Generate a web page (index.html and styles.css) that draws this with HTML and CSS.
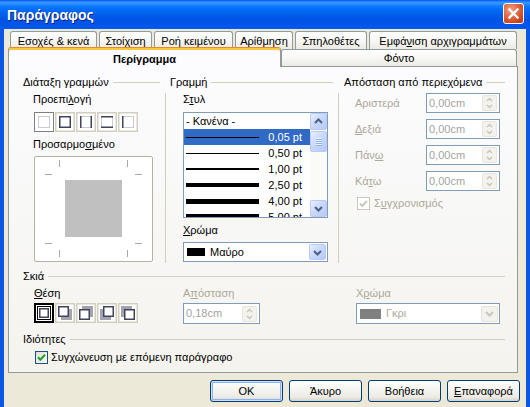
FILE: index.html
```html
<!DOCTYPE html>
<html lang="el">
<head>
<meta charset="utf-8">
<title>Παράγραφος</title>
<link rel="stylesheet" href="styles.css">
</head>
<body>
<div class="window">
  <div class="titlebar">
    <span class="title">Παράγραφος</span>
    <span class="close"><svg width="19" height="19" viewBox="0 0 19 19"><path d="M5.5 5.5 L13.5 13.5 M13.5 5.5 L5.5 13.5" stroke="#fff" stroke-width="2.4" stroke-linecap="square"/></svg></span>
  </div>
  <div class="client">
    <div class="tabs">
      <div class="tabrow row1">
        <div class="tab t1">Εσοχές &amp; κενά</div>
        <div class="tab t2">Στοίχιση</div>
        <div class="tab t3">Ροή κειμένου</div>
        <div class="tab t4">Αρίθμηση</div>
        <div class="tab t5">Σπηλοθέτες</div>
        <div class="tab t6">Εμφά<u>ν</u>ιση αρχιγραμμάτων</div>
      </div>
      <div class="tabrow row2">
        <div class="tab active t7">Περίγραμμα</div>
        <div class="tab t8">Φόντο</div>
      </div>
    </div>

    <div class="panel">
      <div class="top">
        <div class="col c1">
          <div class="gh"><span>Διάταξη γραμμών</span><i></i></div>
          <div class="cb">
            <div class="lbl">Προεπι<u>λ</u>ογή</div>
            <div class="iconset">
              <svg width="20" height="20" viewBox="0 0 20 20"><rect x="0.5" y="0.5" width="19" height="19" fill="#fff" stroke="#000" stroke-dasharray="1 1"/><rect x="4.5" y="4.5" width="11" height="11" fill="none" stroke="#CACAD6"/></svg>
              <svg width="20" height="20" viewBox="0 0 20 20"><rect x="0.75" y="0.75" width="18.5" height="18.5" fill="#fff" stroke="#D3CFBF" stroke-width="1.5"/><rect x="4.75" y="4.75" width="10.5" height="10.5" fill="none" stroke="#40445C" stroke-width="1.5"/></svg>
              <svg width="20" height="20" viewBox="0 0 20 20"><rect x="0.75" y="0.75" width="18.5" height="18.5" fill="#fff" stroke="#D3CFBF" stroke-width="1.5"/><rect x="4.5" y="4.5" width="11" height="11" fill="none" stroke="#CACAD6"/><path d="M4.75 4 V16 M15.25 4 V16" stroke="#40445C" stroke-width="1.5"/></svg>
              <svg width="20" height="20" viewBox="0 0 20 20"><rect x="0.75" y="0.75" width="18.5" height="18.5" fill="#fff" stroke="#D3CFBF" stroke-width="1.5"/><rect x="4.5" y="4.5" width="11" height="11" fill="none" stroke="#CACAD6"/><path d="M4 4.75 H16 M4 15.25 H16" stroke="#40445C" stroke-width="1.5"/></svg>
              <svg width="20" height="20" viewBox="0 0 20 20"><rect x="0.75" y="0.75" width="18.5" height="18.5" fill="#fff" stroke="#D3CFBF" stroke-width="1.5"/><rect x="4.5" y="4.5" width="11" height="11" fill="none" stroke="#CACAD6"/><path d="M4.75 4 V16" stroke="#40445C" stroke-width="1.5"/></svg>
            </div>
            <div class="lbl gap">Προσαρμο<u>σ</u>μένο</div>
            <div class="preview">
              <svg width="117" height="104" viewBox="0 0 117 104">
                <rect x="30" y="23" width="57" height="57" fill="#C0C0C0"/>
                <path d="M24.5 3 V10 M92.5 3 V10 M24.5 93 V100 M92.5 93 V100 M10 17.5 H17 M100 17.5 H107 M10 86.5 H17 M100 86.5 H107" stroke="#A8A8A8" stroke-width="1"/>
              </svg>
            </div>
          </div>
        </div>

        <div class="col c2">
          <div class="gh"><span>Γραμμή</span><i></i></div>
          <div class="cb">
            <div class="lbl">Σ<u>τ</u>υλ</div>
            <div class="listbox">
              <div class="items">
                <div class="item">- Κανένα -</div>
                <div class="item sel"><span class="ln w1"></span><span class="v">0,05 pt</span></div>
                <div class="item"><span class="ln w1"></span><span class="v">0,50 pt</span></div>
                <div class="item"><span class="ln w2"></span><span class="v">1,00 pt</span></div>
                <div class="item"><span class="ln w4"></span><span class="v">2,50 pt</span></div>
                <div class="item"><span class="ln w5"></span><span class="v">4,00 pt</span></div>
                <div class="item"><span class="ln w6"></span><span class="v">5,00 pt</span></div>
              </div>
              <div class="scroll">
                <div class="sbtn"><svg width="15" height="15" viewBox="0 0 15 15"><path d="M4 9 L7.5 5.5 L11 9" fill="none" stroke="#4D6185" stroke-width="2"/></svg></div>
                <div class="thumb"><svg width="15" height="19" viewBox="0 0 15 19"><path d="M4.5 6.5 H10.5 M4.5 8.5 H10.5 M4.5 10.5 H10.5 M4.5 12.5 H10.5" stroke="#EEF4FE" stroke-width="1"/><path d="M5 7.5 H11 M5 9.5 H11 M5 11.5 H11 M5 13.5 H11" stroke="#8CB0F8" stroke-width="1"/></svg></div>
                <div class="track"></div>
                <div class="sbtn"><svg width="15" height="15" viewBox="0 0 15 15"><path d="M4 6 L7.5 9.5 L11 6" fill="none" stroke="#4D6185" stroke-width="2"/></svg></div>
              </div>
            </div>
            <div class="lbl gap"><u>Χ</u>ρώμα</div>
            <div class="combo">
              <span class="swatch"></span><span class="txt">Μαύρο</span>
              <span class="dbtn"><svg width="15" height="15" viewBox="0 0 15 15"><path d="M4 6 L7.5 9.5 L11 6" fill="none" stroke="#4D6185" stroke-width="2"/></svg></span>
            </div>
          </div>
        </div>

        <div class="col c3">
          <div class="gh"><span>Απόσταση από περιεχόμενα</span><i></i></div>
          <div class="cb">
            <div class="row"><span class="rl">Αριστερά</span><div class="spin"><span class="sv">0,00cm</span><span class="sb"><svg width="13" height="16" viewBox="0 0 13 16"><path d="M4 6 L6.5 3.5 L9 6 M4 10 L6.5 12.5 L9 10" fill="none" stroke="#C9C7BA" stroke-width="1.5"/></svg></span></div></div>
            <div class="row"><span class="rl"><u>Δ</u>εξιά</span><div class="spin"><span class="sv">0,00cm</span><span class="sb"><svg width="13" height="16" viewBox="0 0 13 16"><path d="M4 6 L6.5 3.5 L9 6 M4 10 L6.5 12.5 L9 10" fill="none" stroke="#C9C7BA" stroke-width="1.5"/></svg></span></div></div>
            <div class="row"><span class="rl">Πάν<u>ω</u></span><div class="spin"><span class="sv">0,00cm</span><span class="sb"><svg width="13" height="16" viewBox="0 0 13 16"><path d="M4 6 L6.5 3.5 L9 6 M4 10 L6.5 12.5 L9 10" fill="none" stroke="#C9C7BA" stroke-width="1.5"/></svg></span></div></div>
            <div class="row"><span class="rl">Κά<u>τ</u>ω</span><div class="spin"><span class="sv">0,00cm</span><span class="sb"><svg width="13" height="16" viewBox="0 0 13 16"><path d="M4 6 L6.5 3.5 L9 6 M4 10 L6.5 12.5 L9 10" fill="none" stroke="#C9C7BA" stroke-width="1.5"/></svg></span></div></div>
            <div class="chk dis"><svg width="13" height="13" viewBox="0 0 13 13"><rect x="0.5" y="0.5" width="12" height="12" fill="#fff" stroke="#CAC8BB"/><path d="M3 6.5 L5.3 9 L10 3.8" fill="none" stroke="#CAC8BB" stroke-width="2"/></svg><span>Σ<u>υ</u>γχρονισμός</span></div>
          </div>
        </div>
      </div>

      <div class="sec shadow">
        <div class="gh"><span>Σκιά</span><i></i></div>
        <div class="shbody">
          <div>
            <div class="lbl"><u>Θ</u>έση</div>
            <div class="iconset ctl">
              <svg width="20" height="20" viewBox="0 0 20 20"><rect x="1" y="1" width="18" height="18" fill="#fff" stroke="#000" stroke-width="2"/><rect x="3.5" y="3.5" width="13" height="13" fill="none" stroke="#000"/><rect x="5.75" y="5.75" width="8.5" height="8.5" fill="#fff" stroke="#40445C" stroke-width="1.5"/></svg>
              <svg width="20" height="20" viewBox="0 0 20 20"><rect x="0.75" y="0.75" width="18.5" height="18.5" fill="#fff" stroke="#D3CFBF" stroke-width="1.5"/><rect x="6" y="6" width="11" height="11" fill="#A3A3AE"/><rect x="3.75" y="3.75" width="9.5" height="9.5" fill="#fff" stroke="#40445C" stroke-width="1.5"/></svg>
              <svg width="20" height="20" viewBox="0 0 20 20"><rect x="0.75" y="0.75" width="18.5" height="18.5" fill="#fff" stroke="#D3CFBF" stroke-width="1.5"/><rect x="6" y="3" width="11" height="11" fill="#A3A3AE"/><rect x="3.75" y="6.75" width="9.5" height="9.5" fill="#fff" stroke="#40445C" stroke-width="1.5"/></svg>
              <svg width="20" height="20" viewBox="0 0 20 20"><rect x="0.75" y="0.75" width="18.5" height="18.5" fill="#fff" stroke="#D3CFBF" stroke-width="1.5"/><rect x="3" y="6" width="11" height="11" fill="#A3A3AE"/><rect x="6.75" y="3.75" width="9.5" height="9.5" fill="#fff" stroke="#40445C" stroke-width="1.5"/></svg>
              <svg width="20" height="20" viewBox="0 0 20 20"><rect x="0.75" y="0.75" width="18.5" height="18.5" fill="#fff" stroke="#D3CFBF" stroke-width="1.5"/><rect x="3" y="3" width="11" height="11" fill="#A3A3AE"/><rect x="6.75" y="6.75" width="9.5" height="9.5" fill="#fff" stroke="#40445C" stroke-width="1.5"/></svg>
            </div>
          </div>
          <div>
            <div class="lbl dim">Α<u>π</u>όσταση</div>
            <div class="spin ctl small"><span class="sv">0,18cm</span><span class="sb"><svg width="13" height="16" viewBox="0 0 13 16"><path d="M4 6 L6.5 3.5 L9 6 M4 10 L6.5 12.5 L9 10" fill="none" stroke="#C9C7BA" stroke-width="1.5"/></svg></span></div>
          </div>
          <div>
            <div class="lbl dim">Χ<u>ρ</u>ώμα</div>
            <div class="combo ctl disabled">
              <span class="swatch grey"></span><span class="txt">Γκρι</span>
              <span class="dbtn off"><svg width="15" height="15" viewBox="0 0 15 15"><path d="M4 6 L7.5 9.5 L11 6" fill="none" stroke="#C9C7BA" stroke-width="2"/></svg></span>
            </div>
          </div>
        </div>
      </div>

      <div class="sec props">
        <div class="gh"><span>Ιδιότητες</span><i></i></div>
        <div class="chk on"><svg width="13" height="13" viewBox="0 0 13 13"><defs><linearGradient id="cg" x1="0" y1="0" x2="1" y2="1"><stop offset="0" stop-color="#DCDCD7"/><stop offset="1" stop-color="#FFFFFF"/></linearGradient></defs><rect x="0.5" y="0.5" width="12" height="12" fill="url(#cg)" stroke="#1C5180"/><path d="M3 6.3 L5.3 8.8 L10 3.8" fill="none" stroke="#21A121" stroke-width="2"/></svg><span>Συγ<u>χ</u>ώνευση με επόμενη παράγραφο</span></div>
      </div>
    </div>

    <div class="buttons">
      <div class="btn def">OK</div>
      <div class="btn">Άκυρο</div>
      <div class="btn">Βοήθεια</div>
      <div class="btn"><span><u>Ε</u>παναφορά</span></div>
    </div>
  </div>
</div>
</body>
</html>
```

FILE: styles.css
```css
* { box-sizing: border-box; margin: 0; padding: 0; }
html, body { width: 530px; height: 407px; overflow: hidden; }
body {
  font-family: "Liberation Sans", Arial, sans-serif;
  font-size: 11px;
  line-height: 13px;
  color: #000;
  background: #ECE9D8;
}
u { text-decoration: underline; text-underline-offset: 1px; }
svg { display: block; }

.window { width: 530px; height: 407px; display: flex; flex-direction: column; }

.titlebar {
  flex: none;
  height: 29px;
  display: flex;
  align-items: center;
  justify-content: space-between;
  padding: 0 6px 0 7px;
  background: linear-gradient(180deg, #0058EE 0%, #3A93FF 8%, #288EFF 14%, #127DFF 20%, #036FFC 30%, #0262EE 45%, #0057E5 60%, #0054E3 75%, #0055EB 90%, #005BF5 100%);
}
.title {
  color: #fff;
  font-weight: bold;
  font-size: 14px;
  line-height: 16px;
  text-shadow: 1px 1px 0 #0F1F7E;
}
.close {
  width: 21px;
  height: 21px;
  margin-bottom: 2px;
  border: 1px solid #fff;
  border-radius: 3px;
  background: radial-gradient(circle at 35% 30%, #F2A08A 0%, #E26A46 40%, #CC4420 75%, #B83A18 100%);
}

.client {
  flex: 1;
  background: #ECE9D8;
  border-left: 4px solid #0B56E2;
  border-right: 4px solid #0B56E2;
  padding: 2px 0 0 4px;
}

/* tabs */
.tabs { width: 510px; }
.tabrow { display: flex; }
.row1 { height: 18px; gap: 2px; padding-left: 2px; }
.row2 { height: 17px; align-items: flex-end; }
.tab {
  height: 100%;
  border: 1px solid #919B9C;
  border-bottom: 0;
  border-radius: 3px 3px 0 0;
  background: linear-gradient(#FFFFFF, #F7F7F4 50%, #EBEAE3);
  display: flex;
  align-items: center;
  justify-content: center;
  white-space: nowrap;
  padding-top: 1px;
}
.t1 { width: 87px; }
.t2 { width: 53px; }
.t3 { width: 79px; }
.t4 { width: 58px; }
.t5 { width: 72px; }
.t6 { width: 148px; }
.t7 { width: 273px; }
.t8 { width: 236px; }
.tab.active {
  height: 20px;
  margin-bottom: -1px;
  position: relative;
  z-index: 1;
  background: #FCFCFE;
  font-weight: bold;
  border-top: 1px solid #E68B2C;
  box-shadow: inset 0 2px 0 #FFC73C;
  padding-top: 3px;
}

/* panel */
.panel {
  width: 510px;
  height: 307px;
  border: 1px solid #919B9C;
  background: linear-gradient(#FCFCFE, #F4F3EE);
  padding: 9px 12px 0 14px;
}
.top { display: grid; grid-template-columns: 142px 173px 1fr; }
.gh { display: flex; align-items: center; height: 13px; white-space: nowrap; }
.gh i { flex: 1; height: 1px; background: #D0D0BF; margin-left: 4px; }
.c1 .gh { padding-right: 5px; }
.c2 .gh { padding-left: 5px; padding-right: 5px; }
.c3 .gh { padding-left: 6px; }
.cb { margin-top: 4px; height: 170px; }
.c2 .cb, .c3 .cb { border-left: 1px solid #D0D0BF; }
.c1 .cb { padding-left: 10px; }
.c2 .cb { padding-left: 17px; }
.c3 .cb { padding-left: 16px; }

.lbl { height: 13px; white-space: nowrap; }
.lbl.gap { margin-top: 6px; }
.lbl.dim { color: #ACA899; }

.iconset { display: flex; gap: 1px; margin-top: 6px; margin-left: 1px; height: 20px; }
.c1 .lbl.gap { margin-top: 6px; }
.preview {
  margin-top: 5px;
  margin-left: 1px;
  width: 119px;
  height: 106px;
  border: 1px solid #B5B2A3;
  border-radius: 2px;
  background: #fff;
}

/* listbox */
.listbox {
  margin-top: 6px;
  width: 145px;
  height: 106px;
  border: 1px solid #7F9DB9;
  background: #fff;
  display: flex;
}
.items { width: 126px; overflow: hidden; }
.item {
  height: 16px;
  display: flex;
  align-items: center;
  padding: 0 8px 0 2px;
  white-space: nowrap;
}
.item.sel { background: #316AC5; color: #fff; }
.ln { width: 73px; background: #000; display: block; }
.w1 { height: 1px; }
.w2 { height: 2px; }
.w4 { height: 4px; }
.w5 { height: 5px; }
.w6 { height: 6px; }
.v { margin-left: auto; }

.scroll {
  width: 17px;
  display: flex;
  flex-direction: column;
  background: #FAFAF6;
}
.sbtn, .thumb, .dbtn {
  border: 1px solid #B9CBF3;
  border-radius: 2px;
  background: linear-gradient(135deg, #EAF0FE 0%, #C9D8FC 45%, #B6CAF7 100%);
  display: flex;
  align-items: center;
  justify-content: center;
}
.sbtn { width: 17px; height: 17px; }
.thumb { width: 17px; height: 21px; margin-top: 1px; }
.track { flex: 1; }

/* combo */
.combo {
  margin-top: 5px;
  width: 145px;
  height: 20px;
  border: 1px solid #7F9DB9;
  background: #fff;
  display: flex;
  align-items: center;
  padding: 0 1px 0 3px;
}
.swatch { width: 18px; height: 8px; background: #000; margin-right: 5px; flex: none; }
.swatch.grey { width: 21px; height: 10px; background: #808080; margin-right: 5px; }
.combo .txt { flex: 1; white-space: nowrap; }
.dbtn { width: 17px; height: 16px; }
.combo.disabled { width: 144px; height: 21px; color: #ACA899; }
.dbtn.off { background: #F3F2EE; border-color: #E6E4DA; }

/* right column */
.row { display: flex; align-items: center; height: 20px; margin-bottom: 6px; }
.rl { width: 71px; color: #ACA899; white-space: nowrap; }
.spin {
  width: 74px;
  height: 20px;
  border: 1px solid #7F9DB9;
  background: #fff;
  display: flex;
  align-items: center;
  padding: 0 2px 0 2px;
  color: #A3A3A3;
}
.spin.small { width: 77px; height: 21px; }
.sv { flex: 1; white-space: nowrap; }
.sb {
  width: 15px;
  height: 16px;
  border: 1px solid #E8E6DC;
  border-radius: 2px;
  background: #F3F2EE;
  display: flex;
  align-items: center;
  justify-content: center;
}

.chk { display: flex; align-items: center; gap: 3px; height: 13px; white-space: nowrap; }
.chk.dis { color: #ACA899; margin-left: 2px; }
.chk.dis span { margin-left: 1px; }

/* sections */
.sec.shadow { margin-top: 7px; }
.sec.props { margin-top: 9px; }
.shbody {
  display: grid;
  grid-template-columns: 149px 173px 1fr;
  padding-left: 11px;
  margin-top: 4px;
}
.shbody .ctl { margin-top: 3px; }
.shbody .iconset { margin-left: 0; }
.props .chk { margin-top: 5px; padding-left: 12px; }

/* buttons */
.buttons {
  display: flex;
  justify-content: flex-end;
  gap: 6px;
  margin-top: 7px;
  padding-right: 6px;
}
.btn {
  width: 73px;
  height: 22px;
  border: 1px solid #003C74;
  border-radius: 3px;
  background: linear-gradient(#FFFFFF, #F5F5F1 40%, #ECEBE6 80%, #D8D2C6);
  display: flex;
  align-items: center;
  justify-content: center;
  white-space: nowrap;
}
.btn.def { box-shadow: inset 0 0 0 1px #CEE0FB, inset 0 0 0 2px #8FB1EA; }
```
